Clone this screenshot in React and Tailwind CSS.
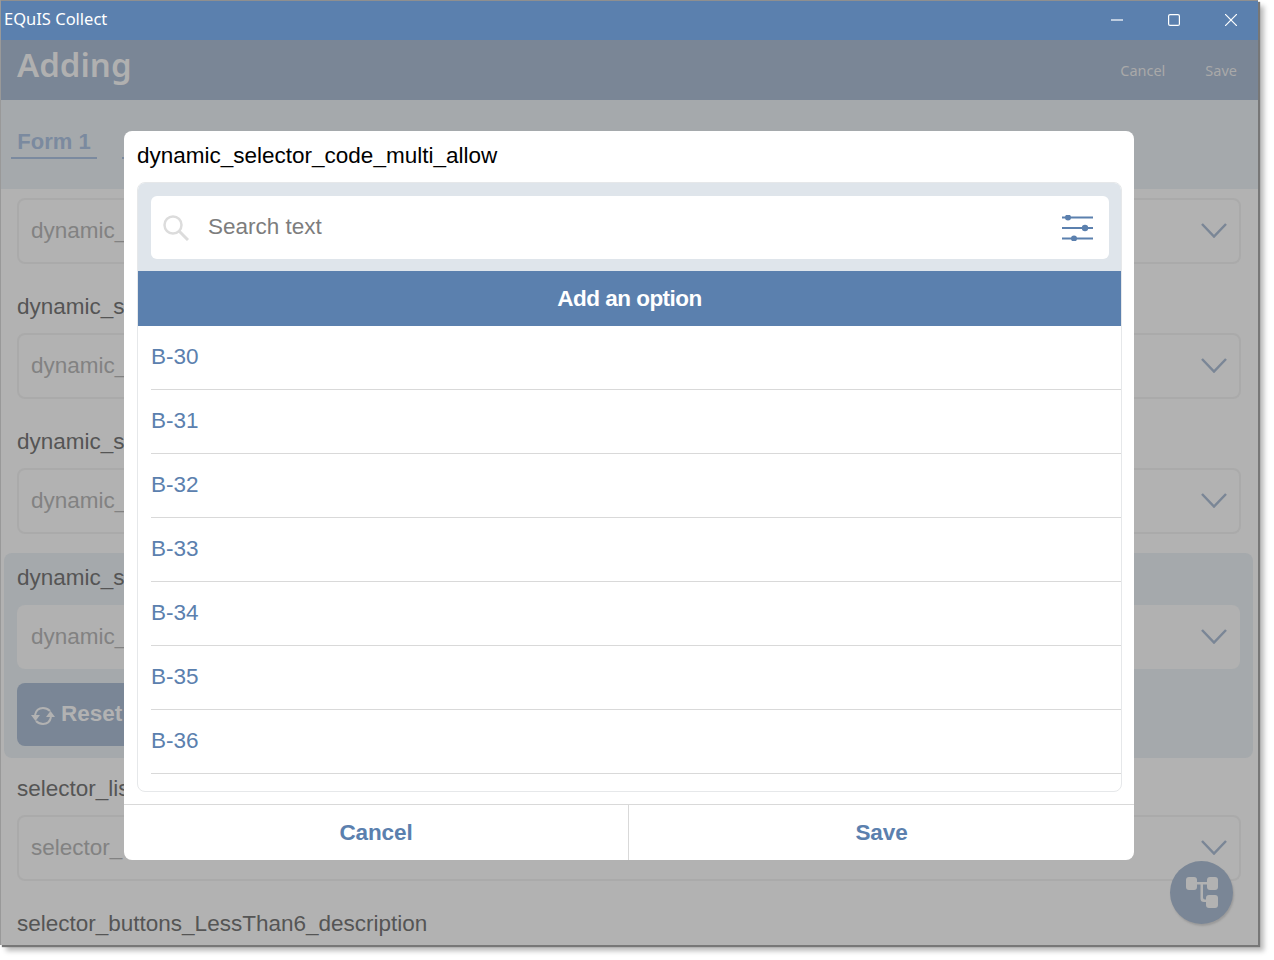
import React from "react";

const options = ["B-30", "B-31", "B-32", "B-33", "B-34", "B-35", "B-36"];

function Chevron() {
  return (
    <svg width="26" height="15" viewBox="0 0 26 15" fill="none" stroke="#7a8696" strokeWidth="2.5" className="mb-[1px] shrink-0">
      <polyline points="1,1 13,13.500 25,1" />
    </svg>
  );
}

function SelectField({ text, plain }) {
  return (
    <div
      className={`flex items-center justify-between rounded-lg ${
        plain ? "h-16 bg-[#b1b1b1] pl-[14px] pr-[13px]" : "ml-4 mr-[17px] h-[66px] border-2 border-[#aaaaaa] pl-[12px] pr-[12px]"
      }`}
    >
      <span className="pb-[1px] text-[22.5px] text-[#828282]">{text}</span>
      <Chevron />
    </div>
  );
}

function Label({ text, className }) {
  return <div className={`h-7 text-[22.5px] leading-7 text-[#555555] ${className}`}>{text}</div>;
}

function SlidersIcon() {
  return (
    <svg width="31" height="26" viewBox="0 0 31 26" stroke="#5b80ae" strokeWidth="2" fill="#5b80ae">
      <line x1="0" y1="2.500" x2="31" y2="2.500" />
      <line x1="0" y1="13" x2="31" y2="13" />
      <line x1="0" y1="23.500" x2="31" y2="23.500" />
      <circle cx="6" cy="2.500" r="3" stroke="none" />
      <circle cx="23" cy="13" r="3.200" stroke="none" />
      <circle cx="12" cy="23.500" r="3" stroke="none" />
    </svg>
  );
}

function SearchIcon() {
  return (
    <svg width="26" height="26" viewBox="0 0 26 26" fill="none" stroke="#dcdcdc" strokeWidth="2.5">
      <circle cx="10" cy="10" r="8.500" />
      <line x1="16" y1="16" x2="25" y2="25" strokeWidth="3" />
    </svg>
  );
}

function ResetIcon() {
  return (
    <svg width="24" height="22" viewBox="0 0 24 22" fill="none" stroke="#b2b2b2" strokeWidth="2" className="mt-[2px]">
      <path d="M4 10 C5 5 8 3 12 3 C15 3 17 4 19 6" />
      <path d="M20 12 C19 17 16 19 12 19 C9 19 7 18 5 16" />
      <polygon points="0,10 9,10 4.500,16" fill="#b2b2b2" stroke="none" />
      <polygon points="15,12 24,12 19.500,6" fill="#b2b2b2" stroke="none" />
    </svg>
  );
}

function TreeIcon() {
  return (
    <svg width="32" height="31" viewBox="0 0 32 31" fill="#b2b2b2">
      <rect x="0" y="0" width="11" height="13" rx="3" />
      <rect x="21" y="0" width="11" height="13" rx="3" />
      <rect x="20" y="18" width="12" height="13" rx="3" />
      <path d="M10 5h12v2.500h-5v13q0 2 2 2h3v2.500h-4q-3.500 0-3.500-3.500v-14h-4.500z" />
    </svg>
  );
}

export default function App() {
  return (
    <div className="h-[960px] w-[1274px] overflow-hidden bg-white font-['Liberation_Sans',sans-serif]">
      <div className="relative h-[945px] w-[1258px] border-l border-[#999999] bg-[#b2b2b2] shadow-[2px_2px_1px_#777777,6px_6px_5px_#bbbbbb]">
        {/* title bar */}
        <div className="flex h-10 items-center justify-between border-t border-[#8f8f8f] bg-[#5b80ae] pb-[2px] pl-[3px]">
          <span className="font-['Noto_Sans',sans-serif] text-[16.5px] text-white">EQuIS Collect</span>
          <div className="flex items-center gap-[45px] pr-[21px]">
            <svg width="12" height="12" viewBox="0 0 12 12" stroke="white" strokeWidth="1.200">
              <line x1="0" y1="6" x2="12" y2="6" />
            </svg>
            <svg width="12" height="12" viewBox="0 0 12 12" stroke="white" strokeWidth="1.200" fill="none">
              <rect x="0.600" y="0.600" width="10.800" height="10.800" rx="1.500" />
            </svg>
            <svg width="12" height="12" viewBox="0 0 12 12" stroke="white" strokeWidth="1.200">
              <line x1="0" y1="0" x2="12" y2="12" />
              <line x1="12" y1="0" x2="0" y2="12" />
            </svg>
          </div>
        </div>

        {/* header */}
        <div className="flex h-[60px] items-center justify-between bg-[#7a8696] pl-[16px] pr-[21px] font-['Noto_Sans',sans-serif]">
          <span className="pb-[11px] text-[33px] font-semibold leading-none text-[#b0b0b0]">Adding</span>
          <div className="flex gap-10 pt-[2px] text-[14.5px] text-[#a9a9a9]">
            <span>Cancel</span>
            <span>Save</span>
          </div>
        </div>

        {/* tabs */}
        <div className="flex h-[89px] items-start gap-[25px] bg-[#a5a9ac] pl-[10px] pt-[28px]">
          <div className="h-[31px] w-[86px] border-b-[2px] border-[#7b8a9f] text-center text-[22px] font-bold leading-7 text-[#7b8a9f]">
            Form 1
          </div>
          <div className="h-[31px] w-[86px] border-b-[2px] border-[#7b8a9f]" />
        </div>

        {/* form fields */}
        <div className="pt-[9px]">
          <SelectField text="dynamic_" />
          <Label text="dynamic_s" className="mt-[29px] pl-4" />
          <div className="mt-[12px]">
            <SelectField text="dynamic_" />
          </div>
          <Label text="dynamic_s" className="mt-[29px] pl-4" />
          <div className="mt-[12px]">
            <SelectField text="dynamic_" />
          </div>
          <div className="ml-[3px] mr-[5px] mt-[19px] h-[205px] rounded-lg bg-[#a5a9ac] px-[13px] pt-[11px]">
            <Label text="dynamic_s" />
            <div className="mt-[13px]">
              <SelectField text="dynamic_" plain />
            </div>
            <div className="mt-[14px] flex h-[63px] w-[140px] items-center gap-[6px] rounded-lg bg-[#7a8696] pl-[14px]">
              <ResetIcon />
              <span className="pb-[2px] text-[22.5px] font-bold text-[#b2b2b2]">Reset</span>
            </div>
          </div>
          <Label text="selector_lis" className="mt-[17px] pl-4" />
          <div className="mt-[12px]">
            <SelectField text="selector_" />
          </div>
          <Label text="selector_buttons_LessThan6_description" className="mt-[29px] pl-4" />
        </div>

        {/* floating button */}
        <div className="absolute left-[1169px] top-[861px] flex h-[63px] w-[63px] items-center justify-center rounded-full bg-[#7a8696] shadow-[1px_2px_2px_#9a9a9a]">
          <TreeIcon />
        </div>

        {/* dialog */}
        <div className="absolute left-[123px] top-[131px] flex h-[729px] w-[1010px] flex-col rounded-lg bg-white">
          <div className="flex h-[51px] shrink-0 items-center pb-[2px] pl-[13px] text-[22.5px] text-black">
            dynamic_selector_code_multi_allow
          </div>
          <div className="ml-[13px] mr-[12px] h-[610px] overflow-hidden rounded-lg border border-[#e6e8ea]">
            <div className="h-[88px] bg-[#dfe5eb] pl-[13px] pr-[12px] pt-[13px]">
              <div className="flex h-[63px] items-center justify-between rounded-md bg-white pl-[12px] pr-[16px]">
                <div className="flex items-center gap-[19px]">
                  <SearchIcon />
                  <span className="pb-[2px] text-[22.5px] text-[#7d7d7d]">Search text</span>
                </div>
                <SlidersIcon />
              </div>
            </div>
            <div className="flex h-[55px] items-center justify-center bg-[#5b80ae] text-[22.5px] font-bold tracking-[-0.5px] text-white">
              Add an option
            </div>
            <div className="pl-[13px]">
              {options.map((o) => (
                <div key={o} className="flex h-16 items-start border-b border-[#d9d9d9] pt-[17px] text-[22.5px] leading-7 text-[#5b80ae]">
                  {o}
                </div>
              ))}
            </div>
          </div>
          <div className="mt-[12px] flex flex-1 border-t border-[#d9d9d9] text-[22.5px] font-bold tracking-[-0.1px] text-[#5b80ae]">
            <div className="flex w-[505px] items-center justify-center border-r border-[#d9d9d9]">Cancel</div>
            <div className="flex flex-1 items-center justify-center">Save</div>
          </div>
        </div>
      </div>
    </div>
  );
}
